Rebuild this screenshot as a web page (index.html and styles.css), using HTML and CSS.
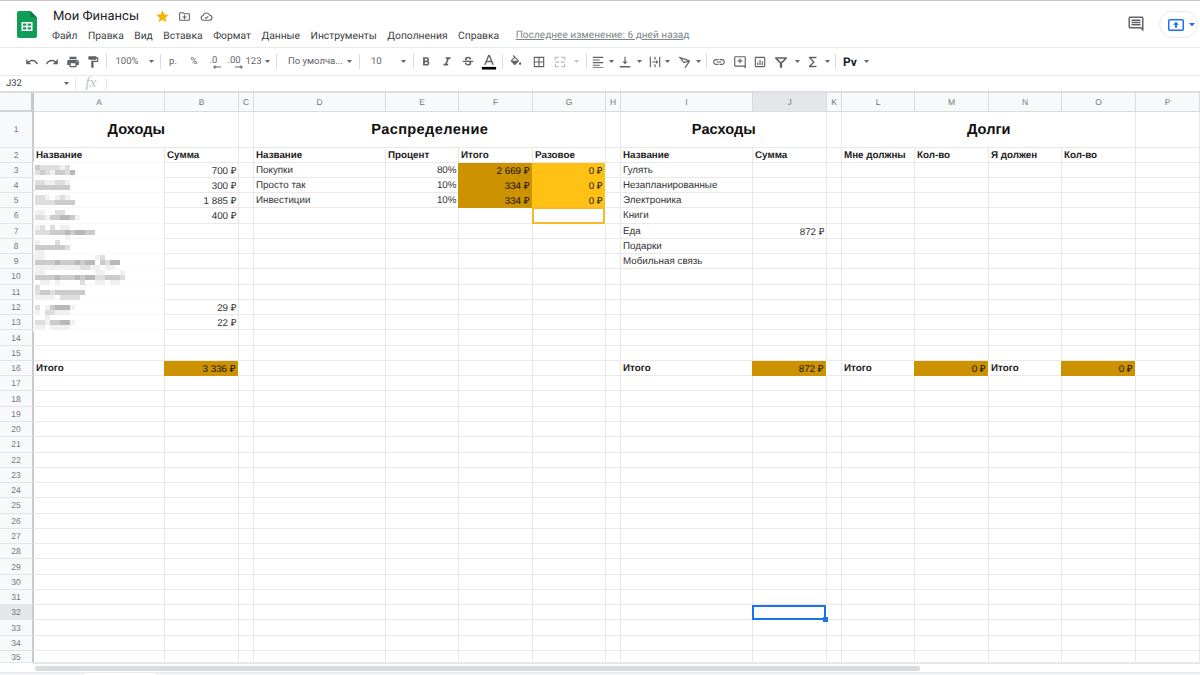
FILE: index.html
```html
<!DOCTYPE html>
<html lang="ru">
<head>
<meta charset="utf-8">
<title>Мои Финансы</title>
<link rel="stylesheet" href="styles.css">
</head>
<body>
<div class="app">
<header class="top">
  <svg class="logo" viewBox="0 0 20 27"><path fill="#0f9d58" d="M2 0h11.500l6.500 6.500V25a2 2 0 0 1-2 2H2a2 2 0 0 1-2-2V2a2 2 0 0 1 2-2z"/><path fill="#0b8043" d="M13.500 0v6.500H20z"/><path fill="#fff" d="M4.500 11h11v9h-11zM6 12.500v2.200h3.300v-2.200zm4.700 0v2.200H14v-2.200zM6 16.200v2.300h3.300v-2.300zm4.700 0v2.300H14v-2.300z" fill-rule="evenodd"/></svg>
  <div class="titles">
    <div class="docline">
      <span class="doctitle">Мои Финансы</span>
      <svg class="star" viewBox="0 0 24 24"><path fill="#f6b400" d="M12 17.270L18.180 21l-1.640-7.030L22 9.240l-7.190-.61L12 2 9.190 8.630 2 9.240l5.460 4.730L5.820 21z"/></svg>
      <svg class="docicon" viewBox="0 0 24 24"><path fill="#5f6368" d="M20 6h-8l-2-2H4c-1.100 0-2 .9-2 2v12c0 1.100.9 2 2 2h16c1.100 0 2-.9 2-2V8c0-1.100-.9-2-2-2zm0 12H4V6h5.170l2 2H20v10zm-9-1h2v-3h3v-2h-3V9h-2v3H8v2h3z"/></svg>
      <svg class="docicon" viewBox="0 0 24 24"><path fill="none" stroke="#5f6368" stroke-width="2" d="M6.500 19a4.500 4.500 0 0 1-.8-8.900A6.500 6.500 0 0 1 18 9.700a4.700 4.700 0 0 1 .2 9.300z"/><path fill="none" stroke="#5f6368" stroke-width="2" d="M9 13.500l2.200 2.200 4-4.200"/></svg>
    </div>
    <nav class="menu">
      <span>Файл</span><span>Правка</span><span>Вид</span><span>Вставка</span><span>Формат</span><span>Данные</span><span>Инструменты</span><span>Дополнения</span><span>Справка</span>
      <a class="saved">Последнее изменение: 6 дней назад</a>
    </nav>
  </div>
  <div class="top-right">
    <svg class="chat" viewBox="0 0 24 24"><path fill="#5f6368" d="M21.990 4c0-1.100-.89-2-1.990-2H4c-1.100 0-2 .9-2 2v12c0 1.100.9 2 2 2h14l4 4-.01-18zM20 4v13.170L18.830 16H4V4h16zM18 14H6v-2h12v2zm0-3H6V9h12v2zm0-3H6V6h12v2z"/></svg>
    <div class="share">
      <svg class="share-ic" viewBox="0 0 16 12"><rect x=".75" y=".75" width="14.500" height="10.500" rx="1" fill="none" stroke="#1a73e8" stroke-width="1.500"/><path fill="#1a73e8" d="M8 2.800l3 3H9v3H7v-3H5z"/></svg>
      <svg class="share-caret" viewBox="0 0 6 4"><path fill="#1a73e8" d="M0 0h6L3 3.500z"/></svg>
    </div>
  </div>
</header>

<div class="toolbar">
  <div class="tb w20"><svg class="ic" viewBox="0 0 24 24"><path d="M12.500 8c-2.650 0-5.050.99-6.900 2.600L2 7v9h9l-3.620-3.620c1.390-1.160 3.160-1.880 5.120-1.880 3.540 0 6.550 2.310 7.600 5.500l2.370-.78C21.080 11.030 17.150 8 12.500 8z"/></svg></div>
  <div class="tb w20"><svg class="ic" viewBox="0 0 24 24"><path d="M18.400 10.600C16.550 8.990 14.150 8 11.500 8c-4.650 0-8.580 3.030-9.960 7.220L3.900 16c1.050-3.190 4.050-5.500 7.600-5.500 1.950 0 3.730.72 5.120 1.880L13 16h9V7l-3.600 3.600z"/></svg></div>
  <div class="tb w21"><svg class="ic" viewBox="0 0 24 24"><path d="M19 8H5c-1.660 0-3 1.340-3 3v6h4v4h12v-4h4v-6c0-1.660-1.340-3-3-3zm-3 11H8v-5h8v5zm3-7c-.55 0-1-.45-1-1s.45-1 1-1 1 .45 1 1-.45 1-1 1zm-1-9H6v4h12V3z"/></svg></div>
  <div class="tb w20"><svg class="ic" viewBox="0 0 24 24"><path d="M18 4V3c0-.55-.45-1-1-1H5c-.55 0-1 .45-1 1v4c0 .55.45 1 1 1h12c.55 0 1-.45 1-1V6h1v4H9v11c0 .55.45 1 1 1h2c.55 0 1-.45 1-1v-9h8V4h-3z"/></svg></div>
  <div class="sep"></div>
  <div class="tb w38">100%</div>
  <div class="tb w11"><svg class="caret" viewBox="0 0 6 4"><path d="M0 0h6L3 3.500z"/></svg></div>
  <div class="sep"></div>
  <div class="tb w22">р.</div>
  <div class="tb w20">%</div>
  <div class="tb w19 dec">.0<svg class="dec-arrow" viewBox="0 0 10 5"><path d="M0 2.500L3 0v2h7v1H3v2z"/></svg></div>
  <div class="tb w22 dec">.00<svg class="dec-arrow" viewBox="0 0 10 5"><path d="M10 2.500L7 0v2H0v1h7v2z"/></svg></div>
  <div class="tb w17">123</div>
  <div class="tb w11"><svg class="caret" viewBox="0 0 6 4"><path d="M0 0h6L3 3.500z"/></svg></div>
  <div class="sep"></div>
  <div class="tb w65 tleft">По умолча...</div>
  <div class="tb w13"><svg class="caret" viewBox="0 0 6 4"><path d="M0 0h6L3 3.500z"/></svg></div>
  <div class="sep"></div>
  <div class="tb w35 tleft">10</div>
  <div class="tb w14"><svg class="caret" viewBox="0 0 6 4"><path d="M0 0h6L3 3.500z"/></svg></div>
  <div class="sep"></div>
  <div class="tb w21"><svg class="ic" viewBox="0 0 24 24"><path d="M15.600 10.790c.97-.67 1.650-1.770 1.650-2.790 0-2.260-1.750-4-4-4H7v14h7.040c2.090 0 3.710-1.700 3.710-3.790 0-1.520-.86-2.820-2.150-3.420zM10 6.500h3c.83 0 1.500.67 1.500 1.500s-.67 1.500-1.500 1.500h-3v-3zm3.500 9H10v-3h3.500c.83 0 1.500.67 1.500 1.500s-.67 1.500-1.500 1.500z"/></svg></div>
  <div class="tb w21"><svg class="ic" viewBox="0 0 24 24"><path d="M10 4v3h2.210l-3.420 8H6v3h8v-3h-2.210l3.420-8H18V4z"/></svg></div>
  <div class="tb w21"><svg class="ic" viewBox="0 0 24 24"><path d="M6.850 7.080C6.850 4.370 9.450 3 12.240 3c1.640 0 3 .49 3.900 1.280.77.65 1.460 1.730 1.460 3.240h-3.010c0-.31-.05-.59-.15-.85-.29-.86-1.200-1.280-2.250-1.280-1.860 0-2.340 1.020-2.340 1.700 0 .48.25.88.74 1.210.38.25.77.48 1.410.7H7.390c-.21-.34-.54-.89-.54-1.920zM21 12v-2H3v2h9.620c1.150.45 1.960.75 1.960 1.970 0 1-.81 1.670-2.280 1.670-1.540 0-2.930-.54-2.930-2.510H6.400c0 .55.08 1.130.24 1.580.81 2.290 3.290 3.300 5.670 3.300 2.270 0 5.300-.89 5.300-4.050 0-.3-.01-1.160-.48-1.940H21V12z"/></svg></div>
  <div class="tb w21"><svg class="ic-a" viewBox="0 0 16 18"><path fill="#5f6368" d="M7 1h2l4.500 11h-1.900l-1-2.700H5.400L4.400 12H2.500zm-1 6.700h4L8 2.800z"/><rect y="14.500" width="16" height="3" fill="#000"/></svg></div>
  <div class="sep"></div>
  <div class="tb w24"><svg class="ic" viewBox="0 0 24 24"><path d="M16.560 8.940L7.620 0 6.210 1.410l2.380 2.380-5.150 5.150c-.59.59-.59 1.540 0 2.120l5.500 5.500c.29.29.68.44 1.060.44s.77-.15 1.060-.44l5.500-5.500c.59-.58.59-1.530 0-2.120zM5.210 10L10 5.210 14.790 10H5.210zM19 11.500s-2 2.170-2 3.500c0 1.100.9 2 2 2s2-.9 2-2c0-1.330-2-3.500-2-3.500z"/></svg></div>
  <div class="tb w21"><svg class="ic" viewBox="0 0 24 24"><path d="M3 3v18h18V3H3zm8 16H5v-6h6v6zm0-8H5V5h6v6zm8 8h-6v-6h6v6zm0-8h-6V5h6v6z"/></svg></div>
  <div class="tb w21"><svg class="ic off" viewBox="0 0 24 24"><path d="M3 3h7v2H5v4H3zM14 3h7v6h-2V5h-5zM3 15h2v4h5v2H3zM19 15h2v6h-7v-2h5zM3 11h5V9l3 3-3 3v-2H3zM21 11h-5V9l-3 3 3 3v-2h5z"/></svg></div>
  <div class="tb w13"><svg class="caret off" viewBox="0 0 6 4"><path d="M0 0h6L3 3.500z"/></svg></div>
  <div class="sep"></div>
  <div class="tb w20"><svg class="ic" viewBox="0 0 24 24"><path d="M3 3h18v2H3zM3 7.500h12v2H3zM3 12h18v2H3zM3 16.500h12v2H3zM3 20.500h18v1.500H3z"/></svg></div>
  <div class="tb w6"><svg class="caret" viewBox="0 0 6 4"><path d="M0 0h6L3 3.500z"/></svg></div>
  <div class="tb w22"><svg class="ic" viewBox="0 0 24 24"><path d="M3 19h18v2.500H3zM11 3h2v8h3.500L12 16l-4.500-5H11z"/></svg></div>
  <div class="tb w6"><svg class="caret" viewBox="0 0 6 4"><path d="M0 0h6L3 3.500z"/></svg></div>
  <div class="tb w22"><svg class="ic shift2" viewBox="0 0 24 24"><path d="M3 3h2v18H3zM19 3h2v18h-2zM11 3h2v5h-2zM11 16h2v5h-2zM7 11h7V8.500l4 3.500-4 3.500V13H7z"/></svg></div>
  <div class="tb w6"><svg class="caret" viewBox="0 0 6 4"><path d="M0 0h6L3 3.500z"/></svg></div>
  <div class="tb w24"><svg class="ic shift3" viewBox="0 0 24 24"><path fill="none" stroke="#5f6368" stroke-width="2" d="M2 4l18 6M4 5l6 8 10-3M12 22l8-12"/></svg></div>
  <div class="tb w9"><svg class="caret" viewBox="0 0 6 4"><path d="M0 0h6L3 3.500z"/></svg></div>
  <div class="sep"></div>
  <div class="tb w22"><svg class="ic" viewBox="0 0 24 24"><path d="M3.900 12c0-1.710 1.390-3.100 3.100-3.100h4V7H7c-2.760 0-5 2.240-5 5s2.240 5 5 5h4v-1.900H7c-1.710 0-3.100-1.390-3.100-3.100zM8 13h8v-2H8v2zm9-6h-4v1.900h4c1.710 0 3.100 1.390 3.100 3.100s-1.390 3.100-3.100 3.100h-4V17h4c2.760 0 5-2.240 5-5s-2.240-5-5-5z"/></svg></div>
  <div class="tb w19"><svg class="ic" viewBox="0 0 24 24"><path d="M20 2H4c-1.100 0-2 .9-2 2v14c0 1.100.9 2 2 2h14l4 3V4c0-1.100-.9-2-2-2zm0 16.500L18.700 18H4V4h16zM11 6h2v3h3v2h-3v3h-2v-3H8V9h3z"/></svg></div>
  <div class="tb w22"><svg class="ic" viewBox="0 0 24 24"><path d="M19 3H5c-1.100 0-2 .9-2 2v14c0 1.100.9 2 2 2h14c1.100 0 2-.9 2-2V5c0-1.100-.9-2-2-2zm0 16H5V5h14zM7 13h2v4H7zM11 8h2v9h-2zM15 11h2v6h-2z"/></svg></div>
  <div class="tb w20"><svg class="ic" viewBox="0 0 24 24"><path d="M2 4h20v2.500l-8 7.500v8h-4v-8L2 6.500zm4 2.500l6 5.500 6-5.500z"/></svg></div>
  <div class="tb w12"><svg class="caret" viewBox="0 0 6 4"><path d="M0 0h6L3 3.500z"/></svg></div>
  <div class="tb w20"><svg class="ic" viewBox="0 0 24 24"><path d="M18 3H5v2.200L12 12l-7 6.800V21h13v-2.500H9l6-6.500-6-6.500h9z"/></svg></div>
  <div class="tb w9"><svg class="caret" viewBox="0 0 6 4"><path d="M0 0h6L3 3.500z"/></svg></div>
  <div class="sep"></div>
  <div class="tb w26 py">Рv</div>
  <div class="tb w6"><svg class="caret" viewBox="0 0 6 4"><path d="M0 0h6L3 3.500z"/></svg></div>
</div>

<div class="formula">
  <div class="namebox"><span>J32</span><svg class="caret" viewBox="0 0 6 4"><path d="M0 0h6L3 3.500z"/></svg></div>
  <div class="fsep"></div>
  <div class="fx">fx</div>
  <div class="fsep"></div>
</div>

<div class="sheet">
  <div class="grid">
    <div class="corner"></div><div class="ch">A</div><div class="ch">B</div><div class="ch">C</div><div class="ch">D</div><div class="ch">E</div><div class="ch">F</div><div class="ch">G</div><div class="ch">H</div><div class="ch">I</div><div class="ch sel">J</div><div class="ch">K</div><div class="ch">L</div><div class="ch">M</div><div class="ch">N</div><div class="ch">O</div><div class="ch">P</div>

    <div class="rh">1</div><div class="title s2">Доходы</div><div></div><div class="title s4 wide">Распределение</div><div></div><div class="title s2">Расходы</div><div></div><div class="title s4">Долги</div><div></div>

    <div class="rh">2</div><div class="b">Название</div><div class="b">Сумма</div><div></div><div class="b">Название</div><div class="b">Процент</div><div class="b">Итого</div><div class="b">Разовое</div><div></div><div class="b">Название</div><div class="b">Сумма</div><div></div><div class="b">Мне должны</div><div class="b">Кол-во</div><div class="b">Я должен</div><div class="b">Кол-во</div><div></div>

    <div class="rh">3</div><div></div><div class="r">700 ₽</div><div></div><div>Покупки</div><div class="r">80%</div><div class="r dark">2 669 ₽</div><div class="r amber">0 ₽</div><div></div><div>Гулять</div><div></div><div></div><div></div><div></div><div></div><div></div><div></div>

    <div class="rh">4</div><div></div><div class="r">300 ₽</div><div></div><div>Просто так</div><div class="r">10%</div><div class="r dark">334 ₽</div><div class="r amber">0 ₽</div><div></div><div>Незапланированные</div><div></div><div></div><div></div><div></div><div></div><div></div><div></div>

    <div class="rh">5</div><div></div><div class="r">1 885 ₽</div><div></div><div>Инвестиции</div><div class="r">10%</div><div class="r dark">334 ₽</div><div class="r amber">0 ₽</div><div></div><div>Электроника</div><div></div><div></div><div></div><div></div><div></div><div></div><div></div>

    <div class="rh">6</div><div></div><div class="r">400 ₽</div><div></div><div></div><div></div><div></div><div class="outlined"></div><div></div><div>Книги</div><div></div><div></div><div></div><div></div><div></div><div></div><div></div>

    <div class="rh">7</div><div></div><div></div><div></div><div></div><div></div><div></div><div></div><div></div><div>Еда</div><div class="r">872 ₽</div><div></div><div></div><div></div><div></div><div></div><div></div>

    <div class="rh">8</div><div></div><div></div><div></div><div></div><div></div><div></div><div></div><div></div><div>Подарки</div><div></div><div></div><div></div><div></div><div></div><div></div><div></div>

    <div class="rh">9</div><div></div><div></div><div></div><div></div><div></div><div></div><div></div><div></div><div>Мобильная связь</div><div></div><div></div><div></div><div></div><div></div><div></div><div></div>

    <div class="rh">10</div><div></div><div></div><div></div><div></div><div></div><div></div><div></div><div></div><div></div><div></div><div></div><div></div><div></div><div></div><div></div><div></div>
    <div class="rh">11</div><div></div><div></div><div></div><div></div><div></div><div></div><div></div><div></div><div></div><div></div><div></div><div></div><div></div><div></div><div></div><div></div>

    <div class="rh">12</div><div></div><div class="r">29 ₽</div><div></div><div></div><div></div><div></div><div></div><div></div><div></div><div></div><div></div><div></div><div></div><div></div><div></div><div></div>

    <div class="rh">13</div><div></div><div class="r">22 ₽</div><div></div><div></div><div></div><div></div><div></div><div></div><div></div><div></div><div></div><div></div><div></div><div></div><div></div><div></div>

    <div class="rh">14</div><div></div><div></div><div></div><div></div><div></div><div></div><div></div><div></div><div></div><div></div><div></div><div></div><div></div><div></div><div></div><div></div>
    <div class="rh">15</div><div></div><div></div><div></div><div></div><div></div><div></div><div></div><div></div><div></div><div></div><div></div><div></div><div></div><div></div><div></div><div></div>

    <div class="rh">16</div><div class="b">Итого</div><div class="r dark">3 336 ₽</div><div></div><div></div><div></div><div></div><div></div><div></div><div class="b">Итого</div><div class="r dark">872 ₽</div><div></div><div class="b">Итого</div><div class="r dark">0 ₽</div><div class="b">Итого</div><div class="r dark">0 ₽</div><div></div>

    <div class="rh">17</div><div></div><div></div><div></div><div></div><div></div><div></div><div></div><div></div><div></div><div></div><div></div><div></div><div></div><div></div><div></div><div></div>
    <div class="rh">18</div><div></div><div></div><div></div><div></div><div></div><div></div><div></div><div></div><div></div><div></div><div></div><div></div><div></div><div></div><div></div><div></div>
    <div class="rh">19</div><div></div><div></div><div></div><div></div><div></div><div></div><div></div><div></div><div></div><div></div><div></div><div></div><div></div><div></div><div></div><div></div>
    <div class="rh">20</div><div></div><div></div><div></div><div></div><div></div><div></div><div></div><div></div><div></div><div></div><div></div><div></div><div></div><div></div><div></div><div></div>
    <div class="rh">21</div><div></div><div></div><div></div><div></div><div></div><div></div><div></div><div></div><div></div><div></div><div></div><div></div><div></div><div></div><div></div><div></div>
    <div class="rh">22</div><div></div><div></div><div></div><div></div><div></div><div></div><div></div><div></div><div></div><div></div><div></div><div></div><div></div><div></div><div></div><div></div>
    <div class="rh">23</div><div></div><div></div><div></div><div></div><div></div><div></div><div></div><div></div><div></div><div></div><div></div><div></div><div></div><div></div><div></div><div></div>
    <div class="rh">24</div><div></div><div></div><div></div><div></div><div></div><div></div><div></div><div></div><div></div><div></div><div></div><div></div><div></div><div></div><div></div><div></div>
    <div class="rh">25</div><div></div><div></div><div></div><div></div><div></div><div></div><div></div><div></div><div></div><div></div><div></div><div></div><div></div><div></div><div></div><div></div>
    <div class="rh">26</div><div></div><div></div><div></div><div></div><div></div><div></div><div></div><div></div><div></div><div></div><div></div><div></div><div></div><div></div><div></div><div></div>
    <div class="rh">27</div><div></div><div></div><div></div><div></div><div></div><div></div><div></div><div></div><div></div><div></div><div></div><div></div><div></div><div></div><div></div><div></div>
    <div class="rh">28</div><div></div><div></div><div></div><div></div><div></div><div></div><div></div><div></div><div></div><div></div><div></div><div></div><div></div><div></div><div></div><div></div>
    <div class="rh">29</div><div></div><div></div><div></div><div></div><div></div><div></div><div></div><div></div><div></div><div></div><div></div><div></div><div></div><div></div><div></div><div></div>
    <div class="rh">30</div><div></div><div></div><div></div><div></div><div></div><div></div><div></div><div></div><div></div><div></div><div></div><div></div><div></div><div></div><div></div><div></div>
    <div class="rh">31</div><div></div><div></div><div></div><div></div><div></div><div></div><div></div><div></div><div></div><div></div><div></div><div></div><div></div><div></div><div></div><div></div>
    <div class="rh sel">32</div><div></div><div></div><div></div><div></div><div></div><div></div><div></div><div></div><div></div><div class="active"><span class="handle"></span></div><div></div><div></div><div></div><div></div><div></div><div></div>
    <div class="rh">33</div><div></div><div></div><div></div><div></div><div></div><div></div><div></div><div></div><div></div><div></div><div></div><div></div><div></div><div></div><div></div><div></div>
    <div class="rh">34</div><div></div><div></div><div></div><div></div><div></div><div></div><div></div><div></div><div></div><div></div><div></div><div></div><div></div><div></div><div></div><div></div>
    <div class="rh">35</div><div></div><div></div><div></div><div></div><div></div><div></div><div></div><div></div><div></div><div></div><div></div><div></div><div></div><div></div><div></div><div></div>
  </div>

  <svg class="mosaic" viewBox="33 162 131 170" shape-rendering="crispEdges">
    <rect x="33" y="162" width="131" height="170" fill="#fff" opacity=".7"/>
    <path fill="#f0f0f0" d="M60 165h5v5h-5zM50 170h5v5h-5zM45 180h10v5H45zM65 180h5v5h-5zM45 195h5v5h-5zM55 195h5v5h-5zM65 195h5v5h-5zM35 210h10v5H35zM45 215h5v5h-5zM75 215h5v5h-5zM35 225h5v5h-5zM60 225h10v5H60zM65 235h5v5h-5zM35 240h5v5h-5zM35 250h10v5H35zM35 255h10v5H35zM95 255h10v5H95zM35 265h45v5H35zM90 265h10v5H90zM105 265h10v5h-10zM35 270h10v5H35zM95 270h10v5H95zM120 270h5v5h-5zM40 280h10v5H40zM55 280h5v5h-5zM95 280h10v5H95zM110 280h10v5h-10zM35 295h20v5H35zM45 305h5v5h-5zM35 310h5v5h-5zM55 310h15v5H55zM70 305h5v5h-5zM45 315h5v5h-5zM45 320h5v5h-5zM70 320h5v5h-5zM35 325h10v5H35zM50 325h20v5H50z"/>
    <path fill="#dedede" d="M40 165h20v5H40zM65 165h5v5h-5zM35 170h5v5h-5zM45 170h5v5h-5zM65 170h5v5h-5zM35 180h10v5H35zM55 180h10v5H55zM35 195h10v5H35zM60 195h5v5h-5zM35 200h20v5H35zM55 210h10v5H55zM35 215h10v5H35zM40 225h5v5h-5zM50 225h5v5h-5zM35 230h15v5H35zM55 240h5v5h-5zM65 245h5v5h-5zM100 255h5v5h-5zM105 260h5v5h-5zM80 265h10v5H80zM95 275h10v5H95zM120 275h5v5h-5zM80 280h5v5h-5zM35 285h5v5h-5zM35 290h5v5h-5zM50 290h5v5h-5zM60 295h20v5H60zM35 305h5v5h-5zM45 310h10v5H45zM35 320h10v5H35z"/>
    <path fill="#cbcbcb" d="M35 165h5v5h-5zM40 170h5v5h-5zM55 170h10v5H55zM35 185h35v5H35zM55 200h20v5H55zM50 215h10v5H50zM70 215h5v5h-5zM50 230h15v5H50zM70 230h5v5h-5zM85 230h10v5H85zM35 245h30v5H35zM35 260h20v5H35zM60 260h15v5H60zM80 260h5v5h-5zM100 260h5v5h-5zM35 275h20v5H35zM60 275h15v5H60zM80 275h5v5h-5zM105 275h15v5h-15zM40 290h10v5H40zM55 290h30v5H55zM50 305h5v5h-5zM50 320h10v5H50z"/>
    <path fill="#b9b9b9" d="M70 170h5v5h-5zM60 215h10v5H60zM65 230h5v5h-5zM75 230h10v5H75zM55 260h5v5h-5zM75 260h5v5h-5zM85 260h10v5H85zM110 260h10v5h-10zM55 275h5v5h-5zM75 275h5v5h-5zM85 275h10v5H85zM55 305h15v5H55zM60 320h10v5H60z"/>
  </svg>

  <div class="scrollbar"><div class="thumb"></div></div>
</div>
<div class="tabs"><div class="tab"></div></div>
</div>
</body>
</html>
```
FILE: styles.css
```css
* { box-sizing: border-box; }
html, body { margin: 0; padding: 0; }
body { background: #fff; font-family: Roboto, "Liberation Sans", sans-serif; color: #3c4043; text-rendering: geometricPrecision; }
.app { width: 1200px; height: 675px; overflow: hidden; display: flex; flex-direction: column; border-top: 1px solid #c8c8c8; }

.top { height: 46px; flex: none; display: flex; padding-left: 17px; }
.logo { width: 20px; height: 27px; margin-top: 10px; flex: none; }
.titles { margin-left: 16px; padding-top: 7px; flex: 1; }
.docline { display: flex; align-items: center; height: 16px; }
.doctitle { font-size: 13px; color: #202124; width: 102px; }
.star { width: 15px; height: 15px; }
.docicon { width: 13px; height: 13px; margin-left: 8px; }
.docicon + .docicon { margin-left: 9px; }
.menu { display: flex; gap: 10.500px; font-size: 10.300px; color: #3c4043; margin-top: 3px; height: 16px; align-items: center; white-space: nowrap; margin-left: -1px; }
.saved { color: #80868b; text-decoration: underline; margin-left: 6px; font-size: 10.150px; }
.top-right { display: flex; align-items: flex-start; flex: none; width: 73px; }
.chat { width: 18px; height: 18px; margin-top: 14px; }
.share { width: 39px; height: 27px; border: 1px solid #e6e8ea; border-radius: 14px; margin-left: 14px; margin-top: 10px; display: flex; align-items: center; padding-left: 8px; flex: none; }
.share-ic { width: 16px; height: 12px; }
.share-caret { width: 6px; height: 4px; margin-left: 5px; }

.toolbar { height: 29px; flex: none; display: flex; align-items: center; padding-left: 22px; border-top: 1px solid #e8eaed; border-bottom: 1px solid #e8eaed; font-size: 9.500px; color: #5f6368; white-space: nowrap; }
.tb { display: flex; align-items: center; justify-content: center; height: 16px; flex: none; position: relative; }
.tleft { justify-content: flex-start; padding-left: 10px; }
.w6 { width: 6px; } .w9 { width: 9px; } .w11 { width: 11px; } .w12 { width: 12px; } .w13 { width: 13px; } .w14 { width: 14px; } .w17 { width: 17px; }
.w19 { width: 19px; } .w20 { width: 20px; } .w21 { width: 21px; } .w22 { width: 22px; } .w24 { width: 24px; } .w26 { width: 26px; }
.w35 { width: 35px; } .w38 { width: 38px; } .w65 { width: 65px; }
.sep { width: 1px; height: 15px; background: #dadce0; margin: 0 1px 0 3px; flex: none; }
.ic { width: 14px; height: 14px; fill: #5f6368; flex: none; }
.ic-a { width: 16px; height: 16px; flex: none; }
.off { opacity: .4; }
.shift2 { margin-left: 4px; }
.shift3 { margin-left: 6px; }
.caret { width: 5px; height: 3.500px; fill: #5f6368; flex: none; }
.dec { padding-bottom: 3px; }
.dec-arrow { position: absolute; width: 8px; height: 4px; bottom: 1px; right: 2px; fill: #5f6368; }
.py { font-size: 12px; font-weight: 700; color: #202124; }

.formula { height: 17px; flex: none; display: flex; align-items: center; border-bottom: 2px solid #dcdee0; font-size: 9.500px; color: #3c4043; }
.namebox { width: 75px; display: flex; align-items: center; justify-content: space-between; padding: 0 6px; flex: none; }
.fsep { width: 1px; height: 12px; background: #e3e5e8; flex: none; }
.fx { width: 30px; text-align: center; font-family: "Liberation Serif", serif; font-style: italic; font-size: 15px; color: #bdc1c6; }

.sheet { position: relative; flex: 1; min-height: 0; }
.grid { display: grid; height: 570px; overflow: hidden; font-family: "Liberation Sans", Arial, sans-serif; font-size: 9.800px; color: #333;
  grid-template-columns: 34px 131px 74px 15px 132px 73px 74px 73px 15px 132px 74px 15px 73px 74px 73px 74px 64px;
  grid-template-rows: 18.500px 36px 15px repeat(32, 15.280px); }
.grid > div { border-right: 1px solid #e9e9ea; border-bottom: 1px solid #e9e9ea; padding: 1px 1.500px 0 2px; display: flex; align-items: center; white-space: nowrap; overflow: hidden; }
.grid > .ch, .grid > .rh, .grid > .corner { background: #f8f9fa; color: #70757a; border-color: #d9dbde; justify-content: center; font-size: 8.500px; padding: 0; }
.grid > .corner { border-right: 3px solid #c5c7ca; border-bottom: 2px solid #d0d2d5; }
.grid > .rh { border-right: 2px solid #c8cacd; border-bottom-color: #e4e5e7; }
.grid > .sel { background: #e4e6e9; }
.grid > .title { font-size: 14.600px; font-weight: 700; color: #111; justify-content: center; }
.grid > .wide { letter-spacing: .38px; }
.s2 { grid-column: span 2; }
.s4 { grid-column: span 4; }
.grid > .b { font-weight: 700; color: #222; }
.grid > .r { justify-content: flex-end; }
.grid > .dark { background: #cc9200; color: #111; border-color: #cc9200; margin: 0 1px 0 -1px; }
.grid > .amber { background: #ffc114; color: #1a1a1a; border-color: #ffc114; margin: 0 1px 0 -1px; }
.grid > .outlined { border: 2px solid #f4b829; margin: -1px 1px 0 -1px; }
.grid > .active { border: 2px solid #1a73e8; overflow: visible; position: relative; padding: 0; margin: 0 1px 0 -1px; }
.handle { position: absolute; right: -4px; bottom: -4px; width: 5px; height: 5px; background: #1a73e8; }

.mosaic { position: absolute; left: 33px; top: 69px; width: 131px; height: 170px; }

.scrollbar { position: absolute; left: 33px; right: 0; top: 570px; height: 10px; background: #fff; border-top: 1px solid #e4e5e7; padding: 2px; }
.thumb { width: 885px; height: 5px; background: #d9dcdf; border-radius: 3px; }
.tabs { height: 3px; background: #f1f3f4; position: relative; flex: none; border-top: 1px solid #e8eaed; }
.tab { position: absolute; left: 85px; width: 70px; top: 0; bottom: 0; background: #fff; }
```
